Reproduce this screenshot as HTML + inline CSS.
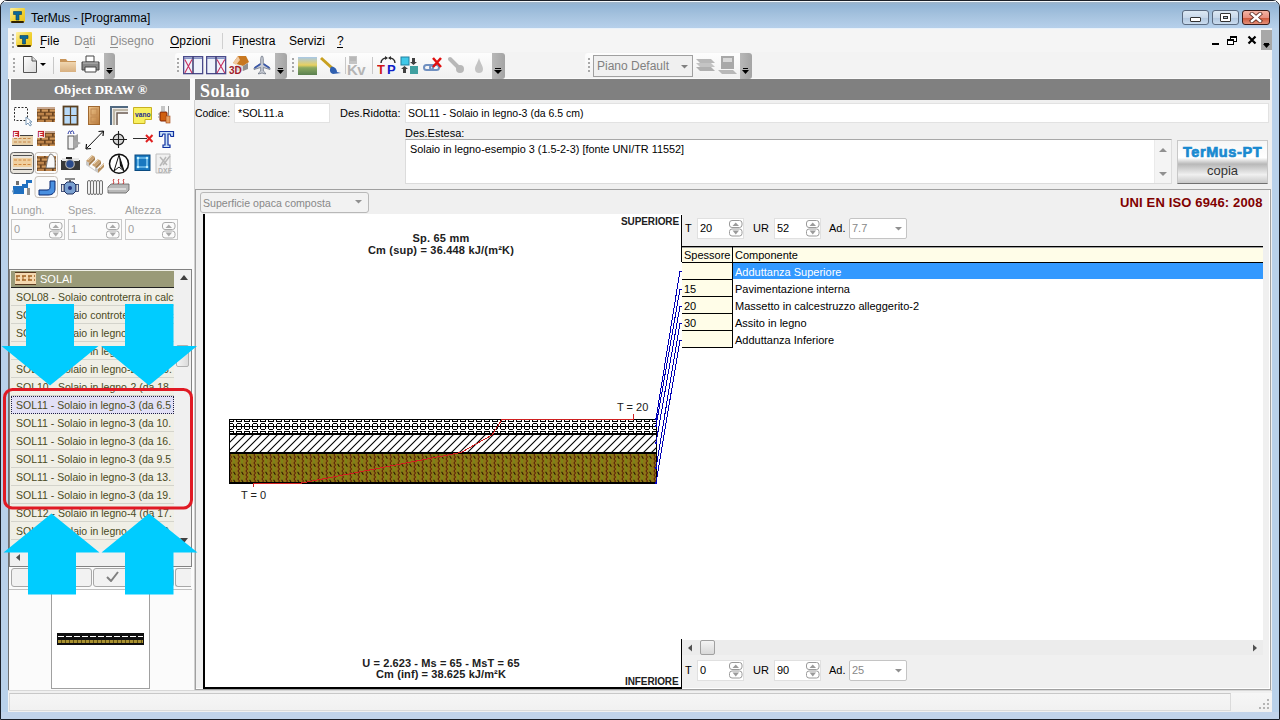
<!DOCTYPE html>
<html><head><meta charset="utf-8">
<style>
*{margin:0;padding:0;box-sizing:border-box}
html,body{width:1280px;height:720px;overflow:hidden;background:#fff}
body{position:relative;font-family:"Liberation Sans",sans-serif;font-size:11px;color:#000}
.a{position:absolute}
.t{position:absolute;white-space:nowrap;line-height:1}
</style></head><body>
<!-- window frame -->
<div class="a" style="left:0;top:0;width:1280px;height:720px;background:#b9d1ea;border:1px solid #1b1f28;border-radius:7px 7px 0 0"></div>
<div class="a" style="left:4px;top:1px;width:1272px;height:1px;background:#f4f8fc"></div>
<div class="a" style="left:1px;top:2px;width:1278px;height:26px;border-radius:5px 5px 0 0;background:linear-gradient(#9fb4c8 0px,#93b5d6 3px,#a6c3df 14px,#b5cfea 25px)"></div>
<div class="a" style="left:1px;top:712px;width:1278px;height:7px;background:#c1d3ea"></div>
<!-- title -->
<div class="a" style="left:10px;top:8px;width:15px;height:14px;background:linear-gradient(135deg,#fff0a0,#f0d030 60%,#e8c020);border-radius:1px"></div>
<div class="a" style="left:11px;top:21px;width:13px;height:2px;background:#302000;border-radius:1px"></div>
<svg class="a" style="left:0;top:0" width="30" height="30"><path d="M13.5 11.5H21.5V14.5H19V20H16V14.5H13.5Z" fill="#0a6898" stroke="#083a60" stroke-width="0.6"/></svg>
<div class="t" style="left:31px;top:12px;font-size:12px;color:#000">TerMus - [Programma]</div>
<!-- window buttons -->
<div class="a" style="left:1182px;top:10px;width:27px;height:15px;border:1px solid #5a6a80;border-radius:3px;background:linear-gradient(#dce8f4 0,#c8d8ea 50%,#b0c6de 51%,#cadcee 100%)"></div>
<div class="a" style="left:1190px;top:17px;width:11px;height:5px;border:1px solid #333;border-radius:1px;background:#fff"></div>
<div class="a" style="left:1212px;top:10px;width:27px;height:15px;border:1px solid #5a6a80;border-radius:3px;background:linear-gradient(#dce8f4 0,#c8d8ea 50%,#b0c6de 51%,#cadcee 100%)"></div>
<div class="a" style="left:1220px;top:13px;width:11px;height:9px;border:1px solid #333;border-radius:1px;background:#fff"></div>
<div class="a" style="left:1223px;top:16px;width:5px;height:3px;border:1px solid #333;background:#b8c8d8"></div>
<div class="a" style="left:1242px;top:10px;width:28px;height:15px;border:1px solid #3a1a18;border-radius:3px;background:linear-gradient(#f4b4a4 0,#e89080 50%,#cc5438 51%,#e49078 100%)"></div>
<svg class="a" style="left:1249px;top:12px" width="14" height="11"><path d="M3 2L11 9M11 2L3 9" stroke="#5a2a20" stroke-width="4.2" stroke-linecap="square"/><path d="M3 2L11 9M11 2L3 9" stroke="#fff" stroke-width="2.6" stroke-linecap="square"/></svg>

<!-- client area -->
<div class="a" style="left:8px;top:28px;width:1264px;height:684px;background:#f0f0f0"></div>
<!-- menu bar -->
<div class="a" style="left:8px;top:28px;width:1264px;height:1px;background:#eaf2fa"></div>
<div class="a" style="left:8px;top:29px;width:1264px;height:23px;background:#f5f5f5"></div>

<!-- menu items -->
<div class="a" style="left:12px;top:34px;width:2px;height:2px;background:#a0a0a0;box-shadow:0 4px 0 #a0a0a0,0 8px 0 #a0a0a0,0 12px 0 #a0a0a0"></div>
<div class="a" style="left:16px;top:32px;width:16px;height:14px;background:linear-gradient(135deg,#fff0a0,#f0d030 60%,#e8c020);border-radius:1px"></div>
<div class="a" style="left:17px;top:45px;width:14px;height:2px;background:#302000;border-radius:1px"></div>
<svg class="a" style="left:0;top:0" width="40" height="50"><path d="M20 35.5H28V38.5H25.5V44H22.5V38.5H20Z" fill="#0a6898" stroke="#083a60" stroke-width="0.6"/></svg>
<div class="t" style="left:40px;top:35px;font-size:12px;color:#000">File</div>
<div class="a" style="left:40px;top:47px;width:5px;height:1px;background:#000"></div>
<div class="t" style="left:74px;top:35px;font-size:12px;color:#8d8d8d">Dati</div>
<div class="t" style="left:110px;top:35px;font-size:12px;color:#8d8d8d">Disegno</div>
<div class="t" style="left:170px;top:35px;font-size:12px;color:#000">Opzioni</div>
<div class="a" style="left:222px;top:33px;width:1px;height:16px;background:#d0d0d0"></div>
<div class="t" style="left:232px;top:35px;font-size:12px;color:#000">Finestra</div>
<div class="t" style="left:289px;top:35px;font-size:12px;color:#000">Servizi</div>
<div class="t" style="left:337px;top:35px;font-size:12px;color:#000">?</div>
<div class="a" style="left:85px;top:47px;width:4px;height:1px;background:#8d8d8d"></div>
<div class="a" style="left:110px;top:47px;width:8px;height:1px;background:#8d8d8d"></div>
<div class="a" style="left:170px;top:47px;width:9px;height:1px;background:#000"></div>
<div class="a" style="left:240px;top:47px;width:3px;height:1px;background:#000"></div>
<div class="a" style="left:337px;top:47px;width:6px;height:1px;background:#000"></div>
<!-- mdi buttons -->
<div class="a" style="left:1212px;top:43px;width:7px;height:2px;background:#000"></div>
<div class="a" style="left:1230px;top:36px;width:7px;height:6px;border:1px solid #000;border-top-width:2px;background:#fff"></div>
<div class="a" style="left:1227px;top:39px;width:7px;height:6px;border:1px solid #000;border-top-width:2px;background:#fff"></div>
<svg class="a" style="left:1247px;top:35px" width="10" height="10"><path d="M1.5 1.5L8.5 8.5M8.5 1.5L1.5 8.5" stroke="#000" stroke-width="2.2"/></svg>
<div class="a" style="left:1261px;top:30px;width:11px;height:20px;background:#a8a8a8"></div>
<div class="a" style="left:1264px;top:43px;width:5px;height:1px;background:#000"></div>
<svg class="a" style="left:1263px;top:44px" width="7" height="5"><path d="M0 0H7L3.5 4Z" fill="#000"/></svg>

<!-- toolbar row -->
<div class="a" style="left:8px;top:52px;width:1264px;height:26px;background:#f3f3f3"></div><div class="a" style="left:8px;top:78px;width:1264px;height:1px;background:#fafafa"></div>

<!-- toolbar 1 -->
<div class="a" style="left:9px;top:53px;width:106px;height:25px;background:linear-gradient(#fdfdfd,#f1f1f1);border-radius:3px"></div>
<div class="a" style="left:13px;top:58px;width:2px;height:2px;background:#a8a8a8;box-shadow:0 4px 0 #a8a8a8,0 8px 0 #a8a8a8,0 12px 0 #a8a8a8"></div>
<svg class="a" style="left:22px;top:55px" width="16" height="19"><path d="M1.5 1.5H10L14.5 6V17.5H1.5Z" fill="url(#gdoc)" stroke="#555"/><path d="M10 1.5V6H14.5" fill="#ddd" stroke="#555"/><defs><linearGradient id="gdoc" x1="0" y1="0" x2="1" y2="1"><stop offset="0" stop-color="#fff"/><stop offset="1" stop-color="#d8d8d8"/></linearGradient></defs></svg>
<svg class="a" style="left:40px;top:63px" width="6" height="4"><path d="M0 0H6L3 3Z" fill="#000"/></svg>
<div class="a" style="left:53px;top:57px;width:1px;height:17px;background:#c8c8c8"></div>
<svg class="a" style="left:59px;top:56px" width="18" height="17"><path d="M1 3H7L8.5 5H17V16H1Z" fill="#c8955a"/><path d="M1 6H17V16H1Z" fill="url(#gfold)"/><defs><linearGradient id="gfold" x1="0" y1="0" x2="0" y2="1"><stop offset="0" stop-color="#f0d6b0"/><stop offset="1" stop-color="#d8b080"/></linearGradient></defs></svg>
<svg class="a" style="left:81px;top:55px" width="19" height="18"><path d="M5 1H13V7H5Z" fill="#fff" stroke="#444"/><path d="M1 7H18V15H1Z" fill="#888" stroke="#444"/><path d="M4 12H15V17H4Z" fill="#fff" stroke="#444"/><path d="M2 8H17" stroke="#bbb"/></svg>
<div class="a" style="left:104px;top:53px;width:11px;height:26px;background:linear-gradient(90deg,#b8b8b8,#a4a4a4);border-radius:0 3px 3px 0"></div>
<div class="a" style="left:107px;top:68px;width:5px;height:1px;background:#000"></div>
<svg class="a" style="left:106px;top:70px" width="7" height="5"><path d="M0 0H7L3.5 4Z" fill="#000"/></svg>

<!-- toolbar 2 -->
<div class="a" style="left:175px;top:53px;width:112px;height:25px;background:linear-gradient(#fdfdfd,#f1f1f1);border-radius:3px"></div>
<div class="a" style="left:177px;top:58px;width:2px;height:2px;background:#a8a8a8;box-shadow:0 4px 0 #a8a8a8,0 8px 0 #a8a8a8,0 12px 0 #a8a8a8"></div>
<svg class="a" style="left:183px;top:56px" width="44" height="19"><g fill="#eef2fa" stroke="#4a4a8a" stroke-width="1.3"><rect x="0.65" y="0.65" width="19" height="17"/><rect x="23.65" y="0.65" width="19" height="17"/></g><path d="M1 2.2H19.5M24 2.2H42.5" stroke="#5a6ab0" stroke-width="1"/><path d="M10 0.5V18M33 0.5V18" stroke="#3a3a70" stroke-width="1.5"/><path d="M1.8 3.5L9 17M9 3.5L1.8 17M34 3.5L41.8 17M41.8 3.5L34 17" stroke="#c83060" stroke-width="1.1"/></svg>
<svg class="a" style="left:227px;top:54px" width="22" height="21"><path d="M6 9L11 2H19L22 8L16 12Z" fill="#c87820"/><path d="M6 9L11 2L13 6L9 11Z" fill="#f0c8a0"/><path d="M9 11L16 12V17H9Z" fill="#d8d8d8"/><path d="M16 12L21 9V15L16 17Z" fill="#909090"/><text x="2" y="20" font-family="Liberation Sans" font-weight="bold" font-size="10" fill="#a01828">3D</text></svg>
<svg class="a" style="left:253px;top:55px" width="18" height="20"><path d="M9 1C10 1 10.3 3 10.3 5V8.5L17 13V14.5L10.3 12.5V16L12.5 18V19L9 18L5.5 19V18L7.7 16V12.5L1 14.5V13L7.7 8.5V5C7.7 3 8 1 9 1Z" fill="#c8ccd4" stroke="#606878" stroke-width="0.7"/><path d="M10.5 9L16.5 13M7.5 9L1.5 13" stroke="#3a58a8" stroke-width="1.6"/></svg>
<div class="a" style="left:275px;top:53px;width:12px;height:26px;background:linear-gradient(90deg,#b8b8b8,#a4a4a4);border-radius:0 3px 3px 0"></div>
<div class="a" style="left:278px;top:68px;width:5px;height:1px;background:#000"></div>
<svg class="a" style="left:277px;top:70px" width="7" height="5"><path d="M0 0H7L3.5 4Z" fill="#000"/></svg>

<!-- toolbar 3 -->
<div class="a" style="left:290px;top:53px;width:215px;height:25px;background:linear-gradient(#fdfdfd,#f1f1f1);border-radius:3px"></div>
<div class="a" style="left:292px;top:58px;width:2px;height:2px;background:#a8a8a8;box-shadow:0 4px 0 #a8a8a8,0 8px 0 #a8a8a8,0 12px 0 #a8a8a8"></div>
<svg class="a" style="left:298px;top:56px" width="19" height="19"><defs><linearGradient id="gland" x1="0" y1="0" x2="0" y2="1"><stop offset="0" stop-color="#a8c8e8"/><stop offset="0.45" stop-color="#e8d060"/><stop offset="0.6" stop-color="#8aa860"/><stop offset="1" stop-color="#5a8050"/></linearGradient></defs><rect x="0" y="1" width="19" height="18" fill="url(#gland)"/></svg>
<svg class="a" style="left:320px;top:56px" width="22" height="19"><path d="M1 2L12 12" stroke="#c8a020" stroke-width="3"/><path d="M11 11C14 10 17 13 17 16L21 17L13 18C10 17 9 14 11 11Z" fill="#3060b0"/></svg>
<div class="a" style="left:345px;top:57px;width:1px;height:17px;background:#c8c8c8"></div>
<svg class="a" style="left:347px;top:55px" width="23" height="21"><path d="M2 1H10V9H2Z" fill="#c4c4c4"/><path d="M3 3H9M3 5H9" stroke="#acacac"/><text x="0" y="20" font-family="Liberation Sans" font-weight="bold" font-size="15" fill="#b4b4b4" letter-spacing="-0.5">Kv</text></svg>
<div class="a" style="left:372px;top:57px;width:1px;height:17px;background:#c8c8c8"></div>
<svg class="a" style="left:377px;top:55px" width="22" height="20"><path d="M4 8C4 4 8 3 10 3M12 3C14 3 18 4 18 8" fill="none" stroke="#303030" stroke-width="1.5"/><path d="M8 1L11 3L8 5ZM14 1L11 3L14 5Z" fill="#303030"/><text x="0" y="19" font-family="Liberation Sans" font-weight="bold" font-size="13" fill="#d01818">T</text><text x="10" y="19" font-family="Liberation Sans" font-weight="bold" font-size="13" fill="#1020c8">P</text></svg>
<svg class="a" style="left:400px;top:56px" width="20" height="19"><rect x="1" y="1" width="8" height="8" fill="#40c8e8" stroke="#2080a0"/><rect x="10" y="10" width="8" height="8" fill="#40a0a0"/><path d="M12 2H15V6H17L13.5 9L10 6H12Z" fill="#404040"/><path d="M6 17H3V13H1L4.5 10L8 13H6Z" fill="#404040"/></svg>
<svg class="a" style="left:423px;top:56px" width="20" height="19"><rect x="1" y="9" width="9" height="5" rx="2.5" fill="none" stroke="#7090c0" stroke-width="2"/><rect x="7" y="9" width="9" height="5" rx="2.5" fill="none" stroke="#7090c0" stroke-width="2"/><path d="M10 2L18 11M18 2L10 11" stroke="#e01010" stroke-width="2.5"/></svg>
<svg class="a" style="left:447px;top:56px" width="18" height="18"><path d="M3 3L12 12" stroke="#b8b8b8" stroke-width="4" stroke-linecap="round"/><circle cx="13" cy="13" r="4" fill="#b8b8b8"/></svg>
<svg class="a" style="left:474px;top:57px" width="10" height="17"><path d="M5 1C6 5 9 9 9 12C9 15 7 16 5 16C3 16 1 15 1 12C1 9 4 5 5 1Z" fill="#c4c4c4"/></svg>
<div class="a" style="left:492px;top:53px;width:13px;height:26px;background:linear-gradient(90deg,#b8b8b8,#a4a4a4);border-radius:0 3px 3px 0"></div>
<div class="a" style="left:495px;top:68px;width:6px;height:1px;background:#000"></div>
<svg class="a" style="left:494px;top:70px" width="8" height="5"><path d="M0 0H8L4 4Z" fill="#000"/></svg>

<!-- toolbar 4 -->
<div class="a" style="left:585px;top:53px;width:167px;height:25px;background:linear-gradient(#fdfdfd,#f1f1f1);border-radius:3px"></div>
<div class="a" style="left:588px;top:58px;width:2px;height:2px;background:#a8a8a8;box-shadow:0 4px 0 #a8a8a8,0 8px 0 #a8a8a8,0 12px 0 #a8a8a8"></div>
<div class="a" style="left:593px;top:55px;width:100px;height:22px;border:1px solid #a0a0a0;background:#f0f0f0"></div>
<div class="t" style="left:597px;top:60px;font-size:12px;color:#808080">Piano Default</div>
<svg class="a" style="left:681px;top:65px" width="7" height="4"><path d="M0 0H7L3.5 3.5Z" fill="#808080"/></svg>
<svg class="a" style="left:695px;top:57px" width="21" height="16"><path d="M1 2H16L20 6H5Z" fill="#b8b8b8"/><path d="M1 6H16L20 10H5Z" fill="#c4c4c4"/><path d="M1 10H16L20 14H5Z" fill="#b0b0b0"/></svg>
<svg class="a" style="left:718px;top:55px" width="20" height="21"><rect x="3" y="1" width="13" height="13" fill="#a8a8a8"/><rect x="5" y="3" width="9" height="4" fill="#d8d8d8"/><path d="M0 15H15L19 19H4Z" fill="#b8b8b8"/></svg>
<div class="a" style="left:740px;top:53px;width:12px;height:26px;background:linear-gradient(90deg,#b8b8b8,#a4a4a4);border-radius:0 3px 3px 0"></div>
<div class="a" style="left:743px;top:68px;width:5px;height:1px;background:#000"></div>
<svg class="a" style="left:742px;top:70px" width="7" height="5"><path d="M0 0H7L3.5 4Z" fill="#000"/></svg>

<!-- left panel bg -->
<div class="a" style="left:8px;top:79px;width:187px;height:612px;background:#fbfbfb"></div>
<div class="a" style="left:8px;top:79px;width:1px;height:612px;background:#707070"></div>
<div class="a" style="left:195px;top:79px;width:1077px;height:1px;background:#fbfbfb"></div>
<!-- headers -->
<div class="a" style="left:11px;top:79px;width:179px;height:21px;background:#808080"></div>
<div class="t" style="left:11px;top:83px;width:179px;text-align:center;font-family:'Liberation Serif',serif;font-weight:bold;font-size:13px;color:#fff">Object DRAW ®</div>
<div class="a" style="left:195px;top:79px;width:1075px;height:21px;background:#808080"></div>
<div class="t" style="left:200px;top:82px;font-family:'Liberation Serif',serif;font-weight:bold;font-size:18px;letter-spacing:0.5px;color:#fff">Solaio</div>
<!-- form -->
<div class="t" style="left:195px;top:109px;font-size:10.4px">Codice:</div>
<div class="a" style="left:234px;top:103px;width:96px;height:20px;background:#fff;border:1px solid #e2e2e2"></div>
<div class="t" style="left:238px;top:108px;font-size:10.7px">*SOL11.a</div>
<div class="t" style="left:340px;top:108px;font-size:11px">Des.Ridotta:</div>
<div class="a" style="left:405px;top:103px;width:864px;height:20px;background:#fff;border:1px solid #e2e2e2"></div>
<div class="t" style="left:408px;top:108px;font-size:10.5px">SOL11 - Solaio in legno-3 (da 6.5 cm)</div>
<div class="t" style="left:405px;top:128px;font-size:11px">Des.Estesa:</div>
<div class="a" style="left:405px;top:139px;width:767px;height:45px;background:#fff;border:1px solid #dcdcdc;border-top-color:#a8a8a8"></div>
<div class="t" style="left:410px;top:144px;font-size:10.85px">Solaio in legno-esempio 3 (1.5-2-3) [fonte UNI/TR 11552]</div>
<div class="a" style="left:1154px;top:140px;width:17px;height:43px;background:#f4f4f4;border-left:1px solid #eaeaea"></div>
<svg class="a" style="left:1159px;top:148px" width="8" height="4"><path d="M0 4L4 0L8 4Z" fill="#909090"/></svg>
<svg class="a" style="left:1159px;top:172px" width="8" height="4"><path d="M0 0L4 4L8 0Z" fill="#909090"/></svg>
<!-- TerMus-PT button -->
<div class="a" style="left:1177px;top:140px;width:91px;height:44px;border:1px solid #c8c8c8;border-bottom:1px solid #707070;background:linear-gradient(#f6f6f6 0,#ffffff 40%,#b8b8b8 55%,#f0f0f0 80%,#c8c8c8 100%)"></div>
<div class="t" style="left:1177px;top:145px;width:91px;text-align:center;font-weight:bold;font-size:14.5px;color:#1a8ad0;letter-spacing:0.6px;-webkit-text-stroke:0.7px #1a8ad0">TerMus-PT</div>
<div class="t" style="left:1177px;top:164px;width:91px;text-align:center;font-size:13px;color:#333">copia</div>

<!-- drawing panel -->
<div class="a" style="left:195px;top:189px;width:1076px;height:501px;border:1px solid #a0a0a0;box-shadow:inset -1px -1px 0 #fff"></div>
<div class="a" style="left:200px;top:192px;width:169px;height:21px;border:1px solid #b8b8b8;border-radius:3px;background:#f2f2f2"></div>
<div class="t" style="left:203px;top:198px;font-size:10.6px;color:#888">Superficie opaca composta</div>
<svg class="a" style="left:355px;top:200px" width="7" height="4"><path d="M0 0H7L3.5 3.5Z" fill="#909090"/></svg>
<div class="t" style="left:1120px;top:196px;font-family:'Liberation Sans';font-weight:bold;font-size:13px;letter-spacing:0.15px;color:#800000">UNI EN ISO 6946: 2008</div>
<!-- drawing area -->
<div class="a" style="left:203px;top:214px;width:479px;height:475px;background:#fff;border-left:2px solid #000;border-bottom:2px solid #000"></div>
<div class="a" style="left:681px;top:215px;width:1px;height:47px;background:#000"></div>
<div class="a" style="left:681px;top:639px;width:1px;height:49px;background:#000"></div>
<div class="a" style="left:682px;top:214px;width:587px;height:33px;background:#f0f0f0"></div>

<!-- right table area -->
<div class="a" style="left:682px;top:347px;width:581px;height:293px;background:#fff"></div>
<div class="a" style="left:682px;top:246px;width:581px;height:1px;background:#000"></div><div class="a" style="left:682px;top:247px;width:581px;height:1px;background:#a0a0a0"></div>
<div class="a" style="left:682px;top:248px;width:581px;height:14px;background:#fffde8"></div>
<div class="a" style="left:682px;top:262px;width:581px;height:1px;background:#000"></div>
<div class="a" style="left:732px;top:246px;width:1px;height:101px;background:#000"></div>
<div class="t" style="left:684px;top:250px;font-size:11px">Spessore</div>
<div class="t" style="left:735px;top:250px;font-size:11px">Componente</div>
<div class="a" style="left:682px;top:263px;width:50px;height:84px;background:#fffde8"></div>
<div class="a" style="left:733px;top:263px;width:530px;height:84px;background:#fff"></div>
<div class="a" style="left:733px;top:263px;width:530px;height:16px;background:#3399ff"></div>
<div class="a" style="left:682px;top:279px;width:51px;height:1px;background:#000"></div>
<div class="a" style="left:682px;top:296px;width:51px;height:1px;background:#000"></div>
<div class="a" style="left:682px;top:313px;width:51px;height:1px;background:#000"></div>
<div class="a" style="left:682px;top:330px;width:51px;height:1px;background:#000"></div>
<div class="a" style="left:682px;top:347px;width:51px;height:1px;background:#000"></div>
<div class="t" style="left:735px;top:267px;font-size:11px;color:#fff">Adduttanza Superiore</div>
<div class="t" style="left:684px;top:284px;font-size:11px">15</div>
<div class="t" style="left:735px;top:284px;font-size:11px">Pavimentazione interna</div>
<div class="t" style="left:684px;top:301px;font-size:11px">20</div>
<div class="t" style="left:735px;top:301px;font-size:11px">Massetto in calcestruzzo alleggerito-2</div>
<div class="t" style="left:684px;top:318px;font-size:11px">30</div>
<div class="t" style="left:735px;top:318px;font-size:11px">Assito in legno</div>
<div class="t" style="left:735px;top:335px;font-size:11px">Adduttanza Inferiore</div>

<!-- top fields -->
<div class="t" style="left:685px;top:223px;font-size:11px">T</div>
<div class="a" style="left:697px;top:218px;width:47px;height:21px;background:#fff;border:1px solid #e0e0e0"></div>
<div class="t" style="left:700px;top:223px;font-size:11px">20</div>
<div class="t" style="left:753px;top:223px;font-size:11px">UR</div>
<div class="a" style="left:774px;top:218px;width:47px;height:21px;background:#fff;border:1px solid #e0e0e0"></div>
<div class="t" style="left:777px;top:223px;font-size:11px">52</div>
<div class="t" style="left:829px;top:223px;font-size:11px">Ad.</div>
<div class="a" style="left:849px;top:218px;width:58px;height:21px;background:#fff;border:1px solid #c4c4c4;border-radius:2px"></div>
<div class="t" style="left:852px;top:223px;font-size:11px;color:#888">7.7</div>
<svg class="a" style="left:895px;top:227px" width="7" height="4"><path d="M0 0H7L3.5 3.5Z" fill="#909090"/></svg>

<!-- bottom scrollbar -->
<div class="a" style="left:682px;top:640px;width:581px;height:15px;background:#ececec"></div>
<svg class="a" style="left:688px;top:644px" width="4" height="8"><path d="M4 0.5V7.5L0 4Z" fill="#505050"/></svg>
<div class="a" style="left:700px;top:640px;width:15px;height:15px;border:1px solid #a0a0a0;border-radius:2px;background:linear-gradient(#f4f4f4,#d8d8d8)"></div>
<svg class="a" style="left:1253px;top:644px" width="4" height="8"><path d="M0 0.5V7.5L4 4Z" fill="#505050"/></svg>
<!-- bottom fields -->
<div class="t" style="left:685px;top:665px;font-size:11px">T</div>
<div class="a" style="left:697px;top:660px;width:47px;height:21px;background:#fff;border:1px solid #e0e0e0"></div>
<div class="t" style="left:700px;top:665px;font-size:11px">0</div>
<div class="t" style="left:753px;top:665px;font-size:11px">UR</div>
<div class="a" style="left:774px;top:660px;width:47px;height:21px;background:#fff;border:1px solid #e0e0e0"></div>
<div class="t" style="left:777px;top:665px;font-size:11px">90</div>
<div class="t" style="left:829px;top:665px;font-size:11px">Ad.</div>
<div class="a" style="left:849px;top:660px;width:58px;height:21px;background:#fff;border:1px solid #c4c4c4;border-radius:2px"></div>
<div class="t" style="left:852px;top:665px;font-size:11px;color:#888">25</div>
<svg class="a" style="left:895px;top:669px" width="7" height="4"><path d="M0 0H7L3.5 3.5Z" fill="#909090"/></svg>

<!-- icon grid -->
<svg class="a" style="left:0;top:0" width="200" height="200">
<defs>
<linearGradient id="gbr" x1="0" y1="0" x2="0" y2="1"><stop offset="0" stop-color="#e8b080"/><stop offset="1" stop-color="#b07038"/></linearGradient>
<linearGradient id="gdoor" x1="0" y1="0" x2="1" y2="1"><stop offset="0" stop-color="#f0c890"/><stop offset="1" stop-color="#b87838"/></linearGradient>
<pattern id="brick" x="37" y="107" width="8" height="3.5" patternUnits="userSpaceOnUse"><rect width="8" height="3.5" fill="#6a4420"/><rect x="0.7" y="0.6" width="6" height="2.2" fill="#d49a5c"/><rect x="-3.3" y="0.6" width="3" height="2.2" fill="#c88c50"/></pattern><pattern id="brick2" x="41" y="108.75" width="8" height="7" patternUnits="userSpaceOnUse"><rect width="8" height="7" fill="#6a4420"/><rect x="0.7" y="0.6" width="6.3" height="2.3" fill="#d49a5c"/><rect x="-3.3" y="4.1" width="6.3" height="2.3" fill="#c88c50"/><rect x="4.7" y="4.1" width="6.3" height="2.3" fill="#c88c50"/></pattern>
</defs>
<!-- row1 -->
<rect x="14.5" y="107.5" width="13" height="13" fill="none" stroke="#303030" stroke-dasharray="2 1.5"/>
<path d="M26 117L26 125L28 123L30 126L31.5 125L29.5 122L32 122Z" fill="#fff" stroke="#7a9ab8"/>
<rect x="37" y="108" width="18" height="14" fill="url(#brick2)"/><rect x="37" y="107" width="18" height="2" fill="#c8a890"/>
<rect x="63.5" y="106.5" width="14" height="18" fill="#b8daf8" stroke="#5a4020" stroke-width="1.8"/><path d="M70.5 107V124M64 115.5H77" stroke="#5a4020" stroke-width="1.2"/>
<rect x="88.5" y="106.5" width="11" height="18" fill="url(#gdoor)" stroke="#a06830"/><rect x="91" y="109" width="6" height="6" fill="none" stroke="#c08850"/><rect x="91" y="117" width="6" height="5" fill="none" stroke="#c08850"/>
<path d="M111 125V107H128" fill="none" stroke="#506880" stroke-width="2"/><path d="M114 125V110H128" fill="none" stroke="#c0b8a8" stroke-width="2.5"/><path d="M117 125V113H128" fill="none" stroke="#6a5a50" stroke-width="1.5"/>
<path d="M133.5 107.5H151.5V119.5H145V123.5H133.5Z" fill="#f8f060" stroke="#c8b020"/><text x="135" y="117" font-family="Liberation Sans" font-weight="bold" font-size="7.5" fill="#1a2a90" textLength="15.5" lengthAdjust="spacingAndGlyphs">vano</text>
<rect x="160" y="112" width="7" height="9" rx="1" fill="#d06010" stroke="#802000"/><rect x="166" y="116" width="4" height="7" fill="#e8a060" stroke="#a04010" stroke-width="0.6"/><path d="M162 106V112M164 106V112M168.5 106V116M158 114H160M158 117H160" stroke="#909090" stroke-width="1"/>
<!-- row2 -->
<rect x="12" y="135" width="21" height="10" fill="#e8d0a8"/><path d="M12 135.5H33M12 145.5H33" stroke="#404040"/><path d="M14 138.5H32M14 142H32" stroke="#c88848" stroke-dasharray="3 1.5"/>
<rect x="12.5" y="130.5" width="7" height="7" fill="#c02030" stroke="#fff" stroke-width="0.8"/><text x="13.5" y="137" font-family="Liberation Sans" font-weight="bold" font-size="7" fill="#fff">E</text>
<rect x="37" y="133" width="18" height="13" fill="url(#brick2)"/><rect x="37" y="131" width="18" height="2" fill="#c8a890"/>
<rect x="37.5" y="130.5" width="7" height="7" fill="#c02030" stroke="#fff" stroke-width="0.8"/><text x="38.5" y="137" font-family="Liberation Sans" font-weight="bold" font-size="7" fill="#fff">E</text>
<rect x="68" y="136" width="6" height="13" fill="#f0f0f0" stroke="#505050"/><path d="M74 136L78 134V147L74 149Z" fill="#a0a0a0"/><path d="M74 140L81 143L74 147Z" fill="#a8a8a8"/><path d="M68 134C69 130 70 130 71 134M71 132C72 130 73 130 74 134" fill="none" stroke="#2030a0" stroke-width="1"/>
<path d="M86.5 148.5L103 131.5" stroke="#101010" stroke-width="1"/><path d="M86 149L86.5 144M86 149L91 148.5M103.5 131L103 136M103.5 131L98.5 131.5" stroke="#101010" stroke-width="1.2"/>
<circle cx="118.5" cy="139.5" r="5.3" fill="#d8d8d8" stroke="#202020" stroke-width="1.2"/><path d="M110 139.5H127M118.5 131V148" stroke="#202020" stroke-width="1.1"/>
<path d="M133 138.5H147" stroke="#303030"/><path d="M146 135L152.5 142M152.5 135L146 142" stroke="#e02020" stroke-width="2"/>
<path d="M159.5 131.5H173.5V136.5H171L170 134H168V145H170V147.5H163V145H165V134H163L162 136.5H159.5Z" fill="#c8e0f8" stroke="#1030a0" stroke-width="1.2"/>
<!-- row3 -->
<rect x="10.5" y="152.5" width="23" height="21" rx="3" fill="#e8e4dc" stroke="#606060"/>
<path d="M13 155.5H32M13 169.5H32" stroke="#505050"/><rect x="13" y="158" width="19" height="9" fill="#f0d0a0"/><path d="M14 160H32M14 164.5H32" stroke="#d08840" stroke-dasharray="3 1.5"/>
<rect x="35" y="152.5" width="22.5" height="21" rx="3" fill="#fbfbfb" stroke="#c8c0b8"/>
<rect x="37" y="156" width="19" height="15" fill="url(#brick2)"/><path d="M50 154C53 154 55 157 55 162L55 168L46 168C47 164 47 158 50 154Z" fill="#f8f8f8" stroke="#606060" stroke-width="0.8"/>
<rect x="61" y="160" width="19" height="10" fill="#383838"/><rect x="62" y="158" width="17" height="3" fill="#e8e8e8"/><rect x="66" y="157" width="6" height="2" fill="#202020"/><circle cx="70" cy="164" r="4.3" fill="#2a4a8a" stroke="#b0b0b0" stroke-width="1.2"/>
<path d="M86 161L92 155L95 157L89 163Z" fill="#c8a070"/><path d="M89 163L95 157L95 160L89 166Z" fill="#a88050"/><path d="M92 165L98 159L101 161L95 167Z" fill="#c8a070"/><path d="M95 167L101 161L101 164L95 170Z" fill="#a88050"/><path d="M98 169L104 163V167L98 173Z" fill="#b89060"/><path d="M86 161V165L98 173V169L95 167V170L89 166V163Z" fill="#c8c8c8"/><path d="M88 160L93 155M94 164L99 159M100 168L104 164" stroke="#f0e0c0" stroke-width="0.8"/><circle cx="119" cy="163.8" r="9.5" fill="#fff" stroke="#101010" stroke-width="1.5"/><path d="M119 155L114 171L119 167L124 171Z" fill="none" stroke="#101010"/><path d="M119 155L120 166L124 171Z" fill="#101010"/>
<rect x="135" y="155" width="15" height="15.5" fill="#1878c0" stroke="#0a4a80"/><path d="M138 158H147V167H138Z" fill="none" stroke="#a0e0ff" stroke-width="1.2"/><g fill="#c0f0ff"><circle cx="138" cy="158" r="1.3"/><circle cx="147" cy="158" r="1.3"/><circle cx="138" cy="167" r="1.3"/><circle cx="147" cy="167" r="1.3"/></g>
<path d="M156 154H170V173H156Z" fill="#f0f0f0" stroke="#c0c0c0"/><path d="M160 157L167 165M166 157L160 166M170 156L163 165" stroke="#b8b8b8" stroke-width="1.5"/><text x="158" y="173" font-family="Liberation Sans" font-weight="bold" font-size="7" fill="#b0b0b0">DXF</text>
<!-- row4 -->
<path d="M13 186H22V184H26V180H32V183H28V188H24V194H13Z" fill="#2070c0"/><rect x="16" y="181" width="3" height="4" fill="#707070"/><rect x="27" y="188" width="3" height="7" fill="#909090"/><path d="M12 191L14 189V195Z" fill="#6090c0"/>
<rect x="35" y="176.5" width="22.5" height="21" rx="3" fill="#fbfbfb" stroke="#c8c0b8"/>
<path d="M50 181H55V189C55 193 52 195 48 195H39V190H47C49 190 50 189 50 187Z" fill="#4a90e0" stroke="#0a2870" stroke-width="1"/>
<rect x="65" y="178" width="10" height="2" fill="#909090"/><rect x="69" y="180" width="2" height="3" fill="#606060"/><path d="M64 185L67 182H73L76 185V191L73 194H67L64 191Z" fill="#7aa0d0" stroke="#203060"/><circle cx="70" cy="188" r="2" fill="#203080"/><rect x="61.5" y="184.5" width="2.5" height="7" fill="#e0e0e0" stroke="#203060" stroke-width="0.8"/><rect x="76" y="184.5" width="2.5" height="7" fill="#e0e0e0" stroke="#203060" stroke-width="0.8"/>
<g stroke="#707070" stroke-width="1" fill="#f0f0f0"><rect x="87.5" y="180.5" width="3" height="14" rx="1.5"/><rect x="90.5" y="180.5" width="3" height="14" rx="1.5"/><rect x="93.5" y="180.5" width="3" height="14" rx="1.5"/><rect x="96.5" y="180.5" width="3" height="14" rx="1.5"/><rect x="99.5" y="180.5" width="3" height="14" rx="1.5"/></g>
<path d="M108 187L111 184H129V190L126 193H108Z" fill="#b8b8b8" stroke="#606060" stroke-width="0.8"/><path d="M108 189H126" stroke="#f0f0f0" stroke-width="1.2"/><path d="M114 179C112 181 115 182 113 184M119 179C117 181 120 182 118 184M124 179C122 181 125 182 123 184" fill="none" stroke="#c02020" stroke-width="1"/>
</svg>
<!-- dims -->
<div class="t" style="left:11px;top:205px;font-size:11px;color:#a0a0a0">Lungh.</div>
<div class="t" style="left:68px;top:205px;font-size:11px;color:#a0a0a0">Spes.</div>
<div class="t" style="left:125px;top:205px;font-size:11px;color:#a0a0a0">Altezza</div>
<div class="a" style="left:11px;top:219px;width:54px;height:21px;border:1px solid #c8c8c8;background:#fbfbfb"></div>
<div class="t" style="left:14px;top:224px;font-size:11px;color:#a0a0a0">0</div>
<div class="a" style="left:68px;top:219px;width:54px;height:21px;border:1px solid #c8c8c8;background:#fbfbfb"></div>
<div class="t" style="left:71px;top:224px;font-size:11px;color:#a0a0a0">1</div>
<div class="a" style="left:125px;top:219px;width:53px;height:21px;border:1px solid #c8c8c8;background:#fbfbfb"></div>
<div class="t" style="left:128px;top:224px;font-size:11px;color:#a0a0a0">0</div>
<!-- list -->
<div class="a" style="left:9px;top:269px;width:183px;height:298px;border:1px solid #828282;background:#f0efe6"></div>
<div class="a" style="left:11px;top:271px;width:163px;height:16px;background:#9a9a78"></div>
<div class="a" style="left:11px;top:287px;width:163px;height:1px;background:#202020"></div>
<svg class="a" style="left:15px;top:271px" width="22" height="15"><rect x="0" y="1" width="21" height="13" fill="#f4d8b0"/><path d="M0 1.5H21M0 13.5H21" stroke="#5a3a20" stroke-width="1"/><path d="M1 5H20M1 9H20" stroke="#a06020" stroke-width="1.3" stroke-dasharray="4 2"/><path d="M2 5V9M8 5V9M14 5V9" stroke="#a06020" stroke-width="1"/></svg>
<div class="t" style="left:40px;top:274px;font-size:11px;color:#fff">SOLAI</div>
<div class="a" style="left:11px;top:305px;width:163px;height:1px;background:#d4d4cc"></div>
<div class="t" style="left:16px;top:292px;width:158px;overflow:hidden;font-size:10.5px;color:#4a4a22">SOL08 - Solaio controterra in calc</div>
<div class="a" style="left:11px;top:323px;width:163px;height:1px;background:#d4d4cc"></div>
<div class="t" style="left:16px;top:310px;width:158px;overflow:hidden;font-size:10.5px;color:#4a4a22">SOL09 - Solaio controterra in calc</div>
<div class="a" style="left:11px;top:341px;width:163px;height:1px;background:#d4d4cc"></div>
<div class="t" style="left:16px;top:328px;width:158px;overflow:hidden;font-size:10.5px;color:#4a4a22">SOL10 - Solaio in legno-1 (da 10.</div>
<div class="a" style="left:11px;top:359px;width:163px;height:1px;background:#d4d4cc"></div>
<div class="t" style="left:16px;top:346px;width:158px;overflow:hidden;font-size:10.5px;color:#4a4a22">SOL10 - Solaio in legno-2 (da 14.</div>
<div class="a" style="left:11px;top:377px;width:163px;height:1px;background:#d4d4cc"></div>
<div class="t" style="left:16px;top:364px;width:158px;overflow:hidden;font-size:10.5px;color:#4a4a22">SOL10 - Solaio in legno-2 (da 16.</div>
<div class="a" style="left:11px;top:395px;width:163px;height:1px;background:#d4d4cc"></div>
<div class="t" style="left:16px;top:382px;width:158px;overflow:hidden;font-size:10.5px;color:#4a4a22">SOL10 - Solaio in legno-2 (da 18.</div>
<div class="a" style="left:11px;top:396px;width:163px;height:18px;background:#e2e0f6;border:1px dotted #202040"></div>
<div class="t" style="left:16px;top:400px;width:158px;overflow:hidden;font-size:10.5px;color:#4a4a22">SOL11 - Solaio in legno-3 (da 6.5</div>
<div class="a" style="left:11px;top:431px;width:163px;height:1px;background:#d4d4cc"></div>
<div class="t" style="left:16px;top:418px;width:158px;overflow:hidden;font-size:10.5px;color:#4a4a22">SOL11 - Solaio in legno-3 (da 10.</div>
<div class="a" style="left:11px;top:449px;width:163px;height:1px;background:#d4d4cc"></div>
<div class="t" style="left:16px;top:436px;width:158px;overflow:hidden;font-size:10.5px;color:#4a4a22">SOL11 - Solaio in legno-3 (da 16.</div>
<div class="a" style="left:11px;top:467px;width:163px;height:1px;background:#d4d4cc"></div>
<div class="t" style="left:16px;top:454px;width:158px;overflow:hidden;font-size:10.5px;color:#4a4a22">SOL11 - Solaio in legno-3 (da 9.5</div>
<div class="a" style="left:11px;top:485px;width:163px;height:1px;background:#d4d4cc"></div>
<div class="t" style="left:16px;top:472px;width:158px;overflow:hidden;font-size:10.5px;color:#4a4a22">SOL11 - Solaio in legno-3 (da 13.</div>
<div class="a" style="left:11px;top:503px;width:163px;height:1px;background:#d4d4cc"></div>
<div class="t" style="left:16px;top:490px;width:158px;overflow:hidden;font-size:10.5px;color:#4a4a22">SOL11 - Solaio in legno-3 (da 19.</div>
<div class="a" style="left:11px;top:521px;width:163px;height:1px;background:#d4d4cc"></div>
<div class="t" style="left:16px;top:508px;width:158px;overflow:hidden;font-size:10.5px;color:#4a4a22">SOL12 - Solaio in legno-4 (da 17.</div>
<div class="a" style="left:11px;top:539px;width:163px;height:1px;background:#d4d4cc"></div>
<div class="t" style="left:16px;top:526px;width:158px;overflow:hidden;font-size:10.5px;color:#4a4a22">SOL12 - Solaio in legno-4 (da 20.</div>

<div class="a" style="left:174px;top:270px;width:17px;height:279px;background:#f0f0f0"></div>
<svg class="a" style="left:180px;top:275px" width="8" height="5"><path d="M0 5L4 0L8 5Z" fill="#404040"/></svg>
<div class="a" style="left:176px;top:345px;width:13px;height:22px;border:1px solid #b0b0b0;border-radius:2px;background:linear-gradient(90deg,#f4f4f4,#dcdcdc)"></div>
<svg class="a" style="left:180px;top:538px" width="8" height="5"><path d="M0 0L4 5L8 0Z" fill="#404040"/></svg>
<div class="a" style="left:10px;top:549px;width:181px;height:17px;background:#f0f0f0"></div>
<svg class="a" style="left:16px;top:554px" width="4" height="7"><path d="M4 0V7L0 3.5Z" fill="#505050"/></svg>
<!-- buttons -->
<div class="a" style="left:11px;top:568px;width:81px;height:19px;border:1px solid #a8a8a8;border-radius:3px;background:#f2f2f2"></div>
<div class="a" style="left:93px;top:568px;width:81px;height:19px;border:1px solid #a8a8a8;border-radius:3px;background:#f2f2f2"></div>
<svg class="a" style="left:106px;top:571px" width="13" height="11"><path d="M1 6L5 10L12 1" fill="none" stroke="#808080" stroke-width="2"/></svg>
<div class="a" style="left:175px;top:568px;width:16px;height:19px;border:1px solid #a8a8a8;border-radius:3px 0 0 3px;background:#f2f2f2;border-right:none"></div>
<div class="a" style="left:9px;top:589px;width:183px;height:1px;background:#c0c0c0"></div>
<!-- preview -->
<div class="a" style="left:51px;top:590px;width:99px;height:99px;border:1px solid #a0a0a0;border-top:none;background:#fff"></div>
<div class="a" style="left:57px;top:633px;width:87px;height:12px;background:#101010"></div>
<div class="a" style="left:58px;top:636px;width:85px;height:1px;background:repeating-linear-gradient(90deg,#fff 0 6px,transparent 6px 8px)"></div>
<div class="a" style="left:58px;top:640px;width:85px;height:3px;background:repeating-linear-gradient(90deg,#a89030 0 3px,#605010 3px 4px)"></div>
<!-- splitter/right border of left panel -->
<div class="a" style="left:194px;top:100px;width:1px;height:590px;background:#d0d0d0"></div>

<!-- drawing -->
<svg class="a" style="left:0;top:0" width="1280" height="720">
<defs>
<pattern id="p1" x="229" y="420" width="8" height="13" patternUnits="userSpaceOnUse">
<rect width="8" height="13" fill="#fff"/>
<g fill="#000" shape-rendering="crispEdges">
<rect x="0" y="1" width="4" height="1"/>
<rect x="0" y="3" width="4" height="1"/>
<rect x="4" y="4" width="1" height="5"/>
<rect x="7" y="4" width="1" height="5"/>
<rect x="0" y="6" width="8" height="1"/>
<rect x="0" y="9" width="4" height="1"/>
<rect x="0" y="11" width="4" height="1"/>
<rect x="4" y="0" width="1" height="2"/><rect x="7" y="0" width="1" height="2"/><rect x="4" y="11" width="1" height="2"/><rect x="7" y="11" width="1" height="2"/>
</g>
</pattern>
<pattern id="p2" x="229" y="435" width="8" height="8" patternUnits="userSpaceOnUse">
<path d="M-1 9L9 -1M-5 5L1 -1M7 9L9 7" stroke="#000" stroke-width="1.1"/>
</pattern>
<pattern id="p3" x="229" y="454" width="8" height="8" patternUnits="userSpaceOnUse">
<rect width="8" height="8" fill="#8c7616"/>
<rect x="4" y="0" width="2" height="8" fill="#7e8416"/>
<path d="M1.3 0V2M2.1 2V4M1.3 4V6M2.1 6V8" stroke="#5a1a08" stroke-width="1.1"/>
<path d="M4.6 1.8L6.4 4.8" stroke="#301000" stroke-width="1.1"/>
</pattern>
</defs>
<rect x="229" y="419" width="427" height="15" fill="url(#p1)"/>
<rect x="229" y="434" width="427" height="18" fill="url(#p2)"/>
<rect x="229" y="453" width="427" height="30" fill="url(#p3)"/>
<path d="M229.5 419V483.5H656" fill="none" stroke="#000" stroke-width="1"/>
<path d="M229 419.5H656.5V484" fill="none" stroke="#000" stroke-width="1"/>
<path d="M229 434H656" stroke="#000" stroke-width="2"/>
<path d="M229 453H656" stroke="#000" stroke-width="2"/>
<path d="M229 483H656" stroke="#000" stroke-width="2"/>
<path d="M230 419.5H656" stroke="#000" stroke-width="1"/>
<!-- temperature line -->
<polyline points="253.5,487 253.5,483.5 299,483.5 461,452.5 492,435 502,419.5 633.5,419.5 633.5,414" fill="none" stroke="#d02020" stroke-width="1" shape-rendering="crispEdges"/>
<!-- blue connectors -->
<g stroke="#0000b4" stroke-width="1" fill="none" shape-rendering="crispEdges">
<polyline points="682,271 680,271 656,419"/>
<polyline points="682,289 680,289 656,426"/>
<polyline points="682,306 680,306 656,443"/>
<polyline points="682,323 680,323 656,468"/>
<polyline points="682,340 680,340 656,483"/>
</g>
<g fill="#0000c8"><rect x="655" y="418" width="2" height="2"/><rect x="655" y="425" width="2" height="2"/><rect x="655" y="442" width="2" height="2"/><rect x="655" y="467" width="2" height="2"/><rect x="655" y="482" width="2" height="2"/></g>
</svg>
<div class="t" style="left:617px;top:402px;font-size:11px;color:#202020">T = 20</div>
<div class="t" style="left:241px;top:490px;font-size:11px;color:#202020">T = 0</div>
<div class="t" style="left:366px;top:232px;width:150px;text-align:center;font-size:11px;letter-spacing:0.2px;font-weight:bold;color:#202020;line-height:12px">Sp. 65 mm<br>Cm (sup) = 36.448 kJ/(m²K)</div>
<div class="t" style="left:621px;top:217px;font-size:10px;letter-spacing:-0.1px;font-weight:bold;color:#202020">SUPERIORE</div>
<div class="t" style="left:356px;top:658px;width:170px;text-align:center;font-size:11px;letter-spacing:0.1px;font-weight:bold;color:#202020;line-height:11px">U = 2.623 - Ms = 65 - MsT = 65<br>Cm (inf) = 38.625 kJ/m²K</div>
<div class="t" style="left:625px;top:677px;font-size:10px;letter-spacing:-0.1px;font-weight:bold;color:#202020">INFERIORE</div>

<!-- spinners -->
<svg class="a" style="left:729px;top:220px" width="14" height="17"><rect x="0.5" y="0.5" width="12.5" height="7" rx="2.5" fill="none" stroke="#9a9a9a" stroke-width="1"/><rect x="0.5" y="9" width="12.5" height="7" rx="2.5" fill="none" stroke="#9a9a9a" stroke-width="1"/><path d="M3.5 6L6.75 2.5L10 6Z" fill="#9a9a9a"/><path d="M3.5 10.5H10L6.75 14.5Z" fill="#9a9a9a"/></svg>
<svg class="a" style="left:806px;top:220px" width="14" height="17"><rect x="0.5" y="0.5" width="12.5" height="7" rx="2.5" fill="none" stroke="#9a9a9a" stroke-width="1"/><rect x="0.5" y="9" width="12.5" height="7" rx="2.5" fill="none" stroke="#9a9a9a" stroke-width="1"/><path d="M3.5 6L6.75 2.5L10 6Z" fill="#9a9a9a"/><path d="M3.5 10.5H10L6.75 14.5Z" fill="#9a9a9a"/></svg>
<svg class="a" style="left:729px;top:662px" width="14" height="17"><rect x="0.5" y="0.5" width="12.5" height="7" rx="2.5" fill="none" stroke="#9a9a9a" stroke-width="1"/><rect x="0.5" y="9" width="12.5" height="7" rx="2.5" fill="none" stroke="#9a9a9a" stroke-width="1"/><path d="M3.5 6L6.75 2.5L10 6Z" fill="#9a9a9a"/><path d="M3.5 10.5H10L6.75 14.5Z" fill="#9a9a9a"/></svg>
<svg class="a" style="left:806px;top:662px" width="14" height="17"><rect x="0.5" y="0.5" width="12.5" height="7" rx="2.5" fill="none" stroke="#9a9a9a" stroke-width="1"/><rect x="0.5" y="9" width="12.5" height="7" rx="2.5" fill="none" stroke="#9a9a9a" stroke-width="1"/><path d="M3.5 6L6.75 2.5L10 6Z" fill="#9a9a9a"/><path d="M3.5 10.5H10L6.75 14.5Z" fill="#9a9a9a"/></svg>
<svg class="a" style="left:49px;top:222px" width="14" height="17"><rect x="0.5" y="0.5" width="12.5" height="7" rx="2.5" fill="none" stroke="#a8a8a8" stroke-width="1"/><rect x="0.5" y="9" width="12.5" height="7" rx="2.5" fill="none" stroke="#a8a8a8" stroke-width="1"/><path d="M3.5 6L6.75 2.5L10 6Z" fill="#a8a8a8"/><path d="M3.5 10.5H10L6.75 14.5Z" fill="#a8a8a8"/></svg>
<svg class="a" style="left:106px;top:222px" width="14" height="17"><rect x="0.5" y="0.5" width="12.5" height="7" rx="2.5" fill="none" stroke="#a8a8a8" stroke-width="1"/><rect x="0.5" y="9" width="12.5" height="7" rx="2.5" fill="none" stroke="#a8a8a8" stroke-width="1"/><path d="M3.5 6L6.75 2.5L10 6Z" fill="#a8a8a8"/><path d="M3.5 10.5H10L6.75 14.5Z" fill="#a8a8a8"/></svg>
<svg class="a" style="left:162px;top:222px" width="14" height="17"><rect x="0.5" y="0.5" width="12.5" height="7" rx="2.5" fill="none" stroke="#a8a8a8" stroke-width="1"/><rect x="0.5" y="9" width="12.5" height="7" rx="2.5" fill="none" stroke="#a8a8a8" stroke-width="1"/><path d="M3.5 6L6.75 2.5L10 6Z" fill="#a8a8a8"/><path d="M3.5 10.5H10L6.75 14.5Z" fill="#a8a8a8"/></svg>
<!-- status bar -->
<div class="a" style="left:8px;top:690px;width:1264px;height:1px;background:#d8d8d8"></div>
<div class="a" style="left:8px;top:693px;width:1264px;height:19px;background:linear-gradient(#f6f6f6,#f0f0f0)"></div>
<div class="a" style="left:9px;top:693px;width:1222px;height:18px;border:1px solid #dadada;border-top-color:#c8c8c8"></div>
<svg class="a" style="left:1258px;top:698px" width="12" height="12"><g fill="#b4b4b4"><rect x="9" y="1" width="2" height="2"/><rect x="5" y="5" width="2" height="2"/><rect x="9" y="5" width="2" height="2"/><rect x="1" y="9" width="2" height="2"/><rect x="5" y="9" width="2" height="2"/><rect x="9" y="9" width="2" height="2"/></g></svg>
<!-- annotation overlay -->
<svg class="a" style="left:0;top:0" width="1280" height="720">
<rect x="4.5" y="389.5" width="187" height="118.5" rx="8" ry="8" fill="none" stroke="#e01a24" stroke-width="3"/>
<g fill="#00ccff">
<path d="M26 304H74V346H98.5L50 385.5L1.5 346H26Z"/>
<path d="M125 304H173.5V346H197L149 385.5L101 346H125Z"/>
<path d="M28 594.5H76V552.5H99.5L51.5 513.5L3.5 552.5H28Z"/>
<path d="M125 594.5H173.5V552.5H197.5L149 513.5L101.5 552.5H125Z"/>
</g>
</svg>
</body></html>
